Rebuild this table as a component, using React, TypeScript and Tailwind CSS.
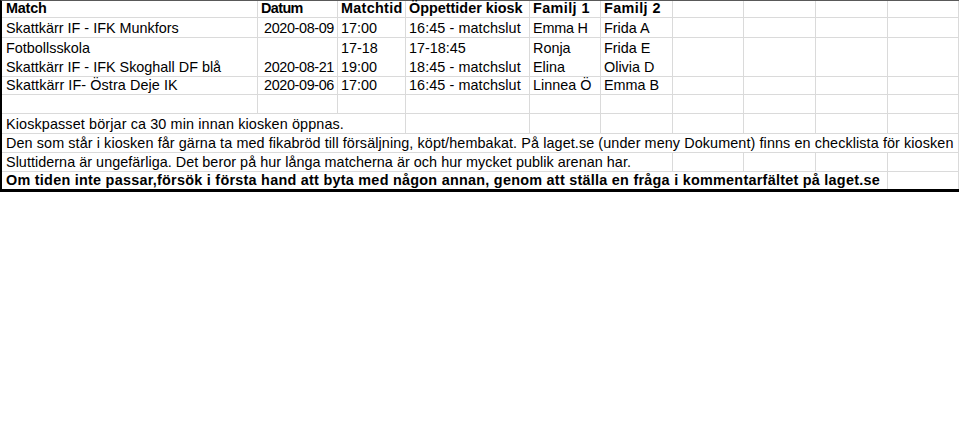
type Cell = { text?: string; span?: number; right?: boolean; tr?: string };
type Row = { h: string; cells: Cell[]; bold?: boolean; noLine?: boolean };

const cols = "grid-cols-[256px_80px_68px_124px_71px_72px_71px_72px_72px_71px]";

const spanClass: Record<number, string> = {
  1: "col-span-1",
  3: "col-span-3",
  6: "col-span-6",
  9: "col-span-9",
  10: "col-span-10",
};

const fill = (cells: Cell[]): Cell[] => {
  const used = cells.reduce((n, c) => n + (c.span ?? 1), 0);
  return [...cells, ...Array.from({ length: 10 - used }, () => ({}))];
};

const rows: Row[] = [
  {
    h: "h-[17px]",
    bold: true,
    cells: fill([
      { text: "Match", tr: "tracking-[-0.2px]" },
      { text: "Datum", tr: "tracking-[-0.6px]" },
      { text: "Matchtid", tr: "tracking-[0.3px]" },
      { text: "Öppettider kiosk" },
      { text: "Familj 1", tr: "tracking-[0.4px]" },
      { text: "Familj 2", tr: "tracking-[0.4px]" },
    ]),
  },
  {
    h: "h-[20px]",
    cells: fill([
      { text: "Skattkärr IF - IFK Munkfors" },
      { text: "2020-08-09", right: true, tr: "tracking-[-0.36px]" },
      { text: "17:00" },
      { text: "16:45 - matchslut", tr: "tracking-[0.08px]" },
      { text: "Emma H", tr: "tracking-[-0.2px]" },
      { text: "Frida A" },
    ]),
  },
  {
    h: "h-[19px]",
    noLine: true,
    cells: fill([
      { text: "Fotbollsskola" },
      {},
      { text: "17-18" },
      { text: "17-18:45" },
      { text: "Ronja" },
      { text: "Frida E" },
    ]),
  },
  {
    h: "h-[20px]",
    cells: fill([
      { text: "Skattkärr IF - IFK Skoghall DF blå" },
      { text: "2020-08-21", right: true, tr: "tracking-[-0.36px]" },
      { text: "19:00" },
      { text: "18:45 - matchslut", tr: "tracking-[0.08px]" },
      { text: "Elina" },
      { text: "Olivia D" },
    ]),
  },
  {
    h: "h-[18px]",
    cells: fill([
      { text: "Skattkärr IF- Östra Deje IK", tr: "tracking-[0.08px]" },
      { text: "2020-09-06", right: true, tr: "tracking-[-0.36px]" },
      { text: "17:00" },
      { text: "16:45 - matchslut", tr: "tracking-[0.08px]" },
      { text: "Linnea Ö" },
      { text: "Emma B" },
    ]),
  },
  { h: "h-[19px]", cells: fill([]) },
  {
    h: "h-[20px]",
    cells: fill([
      { text: "Kioskpasset börjar ca 30 min innan kiosken öppnas.", span: 3, tr: "tracking-[0.12px]" },
    ]),
  },
  {
    h: "h-[19px]",
    cells: fill([
      {
        text: "Den som står i kiosken får gärna ta med fikabröd till försäljning, köpt/hembakat. På laget.se (under meny Dokument) finns en checklista för kiosken",
        span: 10,
        tr: "tracking-[0.09px]",
      },
    ]),
  },
  {
    h: "h-[19px]",
    cells: fill([
      {
        text: "Sluttiderna är ungefärliga. Det beror på hur långa matcherna är och hur mycket publik arenan har.",
        span: 6,
        tr: "tracking-[0.035px]",
      },
    ]),
  },
  {
    h: "h-[17px]",
    bold: true,
    noLine: true,
    cells: fill([
      {
        text: "Om tiden inte passar,försök i första hand att byta med någon annan, genom att ställa en fråga i kommentarfältet på laget.se",
        span: 9,
        tr: "tracking-[0.26px]",
      },
    ]),
  },
];

export default function App() {
  return (
    <div className="h-[430px] w-[960px] bg-white font-['Liberation_Sans',Arial,sans-serif] text-[14.4px] leading-[15px] text-black">
      <div className="w-[959px] border-t border-l-2 border-b-[3px] border-t-[#595959] border-l-black border-b-black">
        {rows.map((row, i) => (
          <div key={i} className={`grid ${cols} ${row.h} ${row.bold ? "font-bold" : ""}`}>
            {row.cells.map((c, j) => (
              <div
                key={j}
                className={`flex items-end overflow-visible whitespace-nowrap border-r border-[#dadada] pb-[1px] ${
                  row.noLine ? "" : "border-b"
                } ${spanClass[c.span ?? 1]} ${c.right ? "justify-end pr-[3px]" : j === 0 ? "pl-[4px]" : "pl-[3px]"} ${
                  c.tr ?? ""
                }`}
              >
                {c.text}
              </div>
            ))}
          </div>
        ))}
      </div>
    </div>
  );
}
